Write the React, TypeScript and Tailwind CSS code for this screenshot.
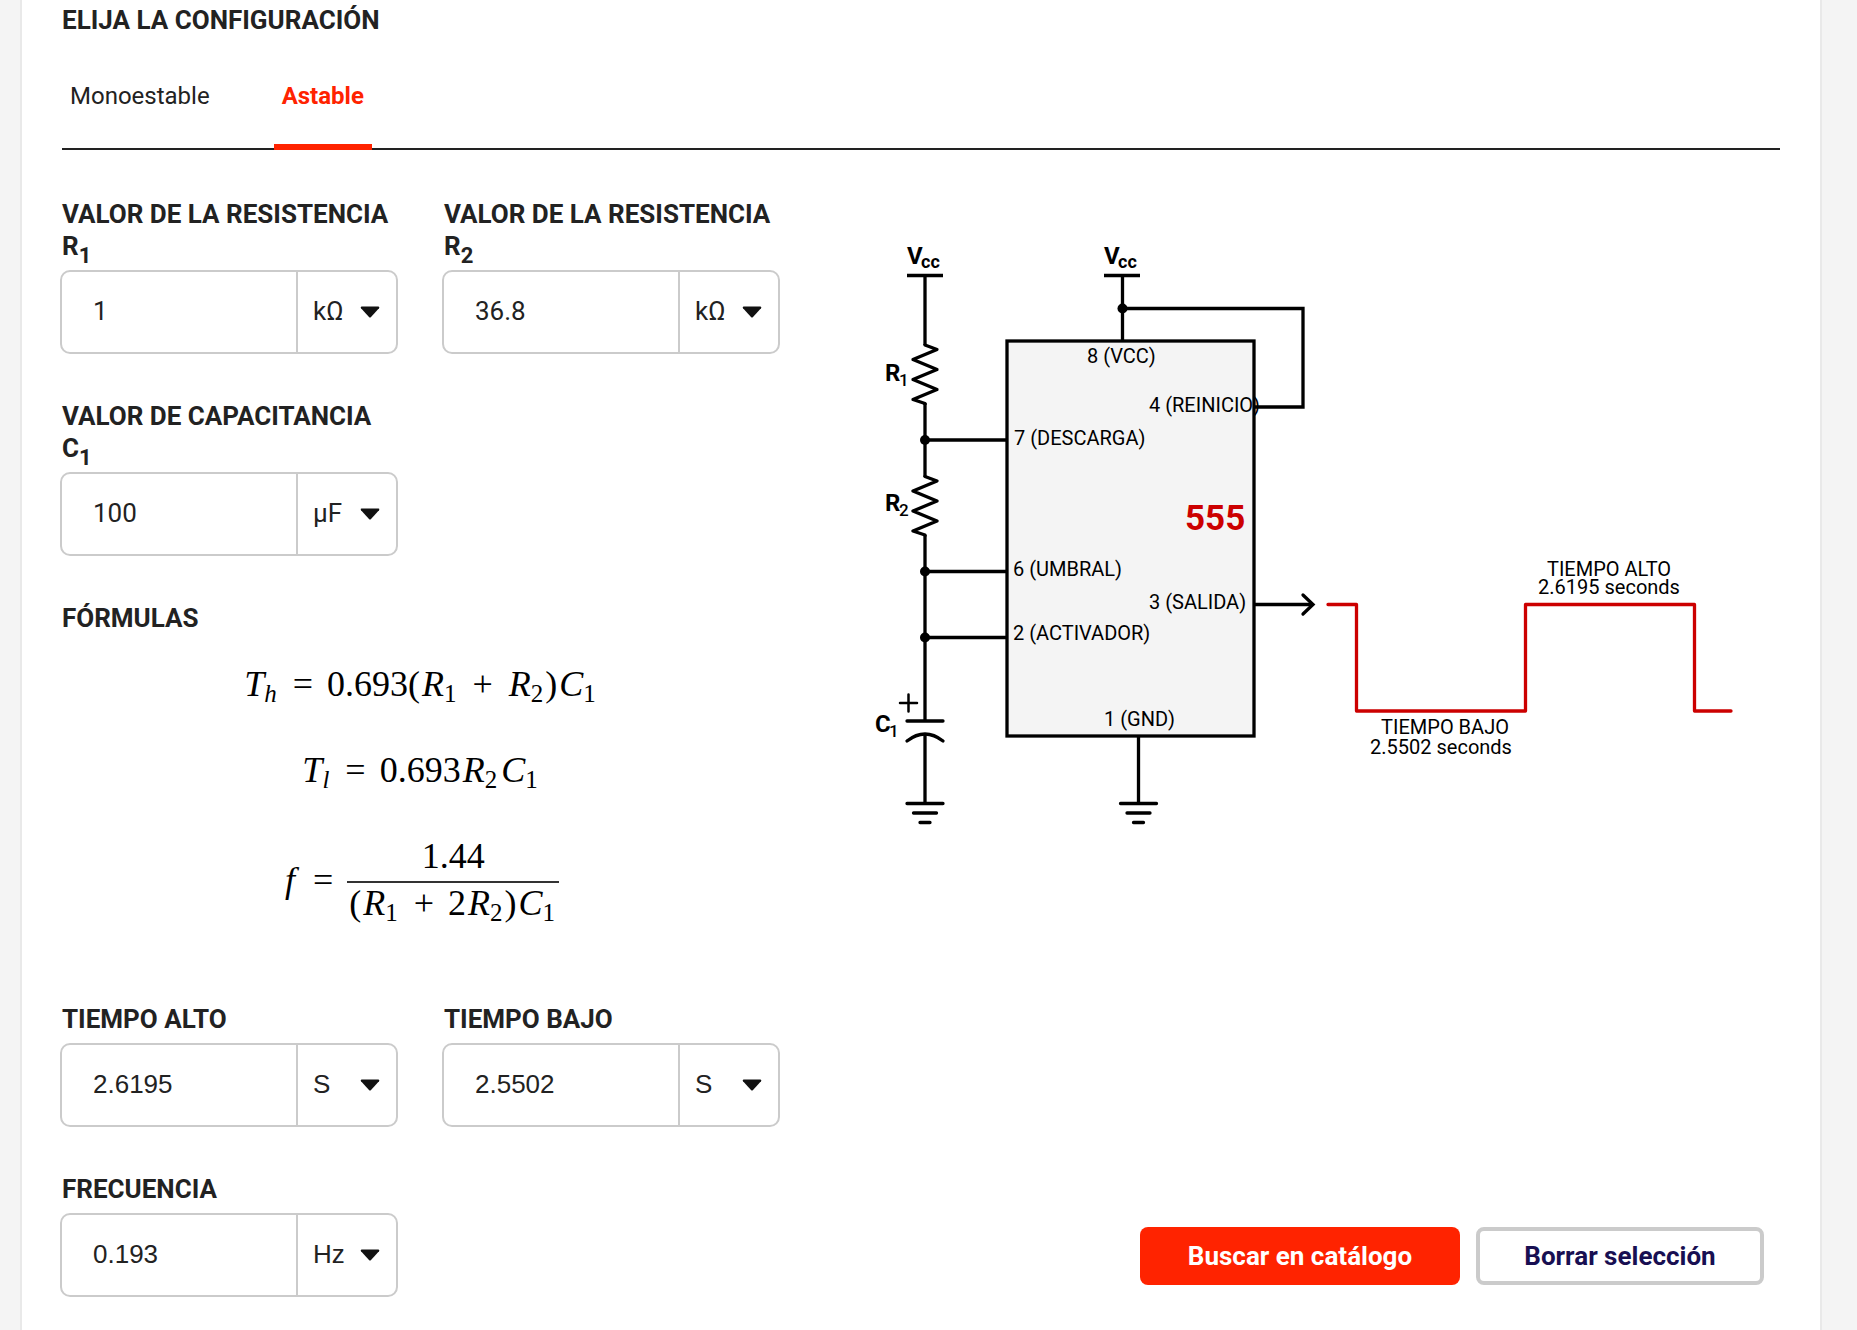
import { useState, type ReactNode } from "react";

type FieldProps = {
  id: string;
  label: ReactNode;
  value: string;
  units: string[];
  unitLabel: string;
  fontClass?: string;
};

function Caret() {
  return (
    <svg
      aria-hidden="true"
      viewBox="0 0 20 12"
      className="pointer-events-none absolute top-[34px] right-4 h-3 w-5"
    >
      <path d="M1.5 0.5H18.5Q20 1 19 2.3L11 11Q10 12 9 11L1 2.3Q0 1 1.5 0.5Z" fill="#111" />
    </svg>
  );
}

function LabelIndex({ children }: { children: ReactNode }) {
  return <sub className="-bottom-2 text-[22px]">{children}</sub>;
}

function Field({ id, label, value, units, unitLabel, fontClass = "font-['Roboto',sans-serif]" }: FieldProps) {
  const [current, setCurrent] = useState(value);
  return (
    <div className="flex w-[338px] flex-col gap-2">
      <label htmlFor={id} className="pl-0.5 text-[26px] leading-8 font-bold">
        {label}
      </label>
      <div className={`flex h-[84px] rounded-[10px] border-2 border-[#cbcbcb] text-[26px] ${fontClass}`}>
        <input
          id={id}
          type="text"
          value={current}
          onChange={(e) => setCurrent(e.target.value)}
          className="w-0 flex-1 bg-transparent pb-0.5 pl-[31px] outline-none"
        />
        <div className="relative w-[100px] border-l-2 border-[#cbcbcb]">
          <select
            aria-label={unitLabel}
            className="h-full w-full appearance-none bg-transparent pb-px pl-[15px] outline-none"
          >
            {units.map((u) => (
              <option key={u}>{u}</option>
            ))}
          </select>
          <Caret />
        </div>
      </div>
    </div>
  );
}

function Var({ name, index }: { name: string; index: ReactNode }) {
  return (
    <span className="px-0.5">
      <i>{name}</i>
      <sub className="text-[25px]">{index}</sub>
    </span>
  );
}

function Op({ children }: { children: ReactNode }) {
  return <span className="mx-3.5">{children}</span>;
}

function Formulas() {
  return (
    <div className="flex flex-col items-center gap-[46px] pt-[30px] pb-[34px] font-['Liberation_Serif',serif] text-[36px] leading-10 text-black">
      <p>
        <Var name="T" index={<i>h</i>} />
        <Op>=</Op>0.693(
        <Var name="R" index="1" />
        <Op>+</Op>
        <Var name="R" index="2" />)<Var name="C" index="1" />
      </p>
      <p>
        <Var name="T" index={<i>l</i>} />
        <Op>=</Op>0.693
        <Var name="R" index="2" />
        <Var name="C" index="1" />
      </p>
      <div className="flex items-center">
        <span>
          <i className="px-1">f</i>
          <Op>=</Op>
        </span>
        <span className="flex flex-col items-center">
          <span className="pb-[5px]">1.44</span>
          <span className="border-t-2 border-[#333] px-0.5">
            (<Var name="R" index="1" />
            <Op>+</Op>2<Var name="R" index="2" />)<Var name="C" index="1" />
          </span>
        </span>
      </div>
    </div>
  );
}

function Resistor({ y }: { y: number }) {
  return (
    <path
      transform={`translate(0 ${y})`}
      d="M925 -1V0L937 4.5L913 14.5L937 24.5L913 34.5L937 44.5L913 54.5L925 58.5V60"
    />
  );
}

function Ground({ x }: { x: number }) {
  return (
    <path
      transform={`translate(${x} 0)`}
      strokeLinecap="round"
      d="M-18 803.5H18M-11.5 813H11.5M-5 822.5H5"
    />
  );
}

function Circuit() {
  return (
    <svg
      role="img"
      aria-label="Circuito temporizador 555 astable"
      viewBox="780 230 1000 600"
      className="mt-8 h-auto w-full font-['Roboto',sans-serif]"
    >
      <g fill="none" stroke="#000" strokeWidth="3.3" strokeLinejoin="miter">
        <rect x="1007" y="341" width="247" height="395" fill="#f4f4f4" />
        <path d="M907 275.5H943M1104 275.5H1140" />
        <path d="M925 275V345M925 403V477M925 535V721M925 734V803" />
        <g strokeLinejoin="round">
          <Resistor y={345} />
          <Resistor y={476.5} />
        </g>
        <path d="M925 440H1007M925 571.5H1007M925 637.5H1007" />
        <path d="M907 721H943M907 741Q925 727 943 741" strokeLinecap="round" />
        <path d="M900 703H917M908.5 694.5V711.5" strokeWidth="2.5" strokeLinecap="round" />
        <path d="M1122.5 275V341M1122.5 308.5H1303V407H1254" />
        <path d="M1138.5 736V803M1254 604.5H1312" />
        <path d="M1303 595L1313 604.5L1303 614" strokeLinecap="round" />
        <Ground x={925} />
        <Ground x={1138.5} />
        <path
          d="M1328 604.5H1356.5V711H1525.5V604.5H1694.5V711H1731"
          stroke="#c00"
          strokeLinecap="round"
          strokeLinejoin="round"
        />
      </g>
      <g fill="#000">
        <circle cx="925" cy="440" r="5" />
        <circle cx="925" cy="571.5" r="5" />
        <circle cx="925" cy="637.5" r="5" />
        <circle cx="1122.5" cy="308.5" r="5" />
      </g>
      <g fontSize="24" fontWeight="700">
        <text x="907" y="264">V</text>
        <text x="1104" y="264">V</text>
        <text x="885" y="381">R</text>
        <text x="885" y="511">R</text>
        <text x="875" y="732">C</text>
      </g>
      <g fontSize="18" fontWeight="700">
        <text x="921" y="268">cc</text>
        <text x="1118" y="268">cc</text>
      </g>
      <g fontSize="17" fontWeight="500">
        <text x="899" y="386">1</text>
        <text x="899" y="516">2</text>
        <text x="889" y="737">1</text>
      </g>
      <text x="1185" y="530" fontSize="35" fontWeight="700" fill="#c00">555</text>
      <g fontSize="20">
        <text x="1087" y="363">8 (VCC)</text>
        <text x="1149" y="412">4 (REINICIO)</text>
        <text x="1014" y="445">7 (DESCARGA)</text>
        <text x="1013" y="576">6 (UMBRAL)</text>
        <text x="1149" y="609">3 (SALIDA)</text>
        <text x="1013" y="640">2 (ACTIVADOR)</text>
        <text x="1104" y="726">1 (GND)</text>
      </g>
      <g fontSize="20" textAnchor="middle">
        <text x="1609" y="576">TIEMPO ALTO</text>
        <text x="1609" y="594">2.6195 seconds</text>
        <text x="1445" y="734">TIEMPO BAJO</text>
        <text x="1441" y="754">2.5502 seconds</text>
      </g>
    </svg>
  );
}

export default function App() {
  const arial = "font-['Liberation_Sans',Arial,sans-serif]";
  const time = ["S", "ms", "µs"];
  const ohms = ["kΩ", "Ω", "MΩ"];
  return (
    <div className="min-h-screen bg-[#f4f4f4] pr-[35px] pl-5 font-['Roboto',sans-serif] text-[#222]">
      <main className="min-h-screen border-x-2 border-[#e9e9e9] bg-white px-10 pt-1 pb-8">
        <h2 className="text-[26px] leading-8 font-bold">ELIJA LA CONFIGURACIÓN</h2>
        <div role="tablist" className="mt-9 flex h-[78px] gap-14 border-b-2 border-[#222] text-2xl">
          <button role="tab" aria-selected="false" className="flex px-2 pt-2">
            Monoestable
          </button>
          <button
            role="tab"
            aria-selected="true"
            className="-mb-0.5 flex border-b-6 border-[#ff2300] px-2 pt-2 font-bold text-[#ff2300]"
          >
            Astable
          </button>
        </div>

        <div className="-ml-0.5 flex pt-12">
          <form className="flex w-[720px] shrink-0 flex-col">
            <div className="flex flex-wrap gap-x-11 gap-y-[46px]">
              <Field
                id="r1"
                label={<>VALOR DE LA RESISTENCIA R<LabelIndex>1</LabelIndex></>}
                value="1"
                units={ohms}
                unitLabel="Unidad de R1"
              />
              <Field
                id="r2"
                label={<>VALOR DE LA RESISTENCIA R<LabelIndex>2</LabelIndex></>}
                value="36.8"
                units={ohms}
                unitLabel="Unidad de R2"
              />
              <Field
                id="c1"
                label={<>VALOR DE CAPACITANCIA C<LabelIndex>1</LabelIndex></>}
                value="100"
                units={["µF", "nF", "pF"]}
                unitLabel="Unidad de C1"
              />
            </div>

            <h3 className="mt-[46px] pl-0.5 text-[26px] leading-8 font-bold">FÓRMULAS</h3>
            <Formulas />

            <div className="mt-[46px] flex flex-wrap gap-x-11 gap-y-[46px]">
              <Field id="th" label="TIEMPO ALTO" value="2.6195" units={time} unitLabel="Unidad de tiempo alto" fontClass={arial} />
              <Field id="tl" label="TIEMPO BAJO" value="2.5502" units={time} unitLabel="Unidad de tiempo bajo" fontClass={arial} />
              <Field id="freq" label="FRECUENCIA" value="0.193" units={["Hz", "kHz"]} unitLabel="Unidad de frecuencia" fontClass={arial} />
            </div>
          </form>

          <div className="flex min-w-0 flex-1 flex-col justify-between">
            <Circuit />
            <div className="flex justify-end gap-4 pr-4 pb-3">
              <button className="h-[58px] w-80 rounded-lg bg-[#ff2300] text-[26px] font-bold text-white">
                Buscar en catálogo
              </button>
              <button className="h-[58px] w-72 rounded-lg border-4 border-[#cbcbcb] bg-white text-[26px] font-bold text-[#180f52]">
                Borrar selección
              </button>
            </div>
          </div>
        </div>
      </main>
    </div>
  );
}
